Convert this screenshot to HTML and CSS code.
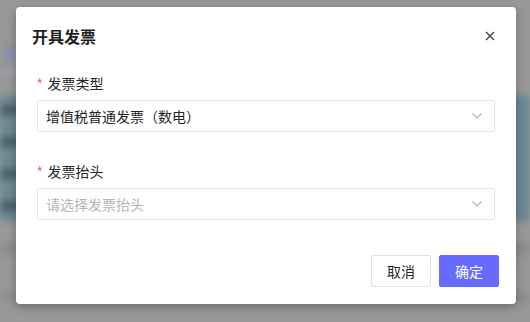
FILE: index.html
```html
<!DOCTYPE html>
<html lang="zh-CN">
<head>
    <meta charset="UTF-8">
    <meta name="viewport" content="width=device-width, initial-scale=1.0">
    <title>开具发票</title>
    <link rel="stylesheet" href="styles.css">
</head>
<body>
    <!-- page behind the dialog, dimmed and blurred -->
    <div class="page">
        <div class="page-top"></div>
        <div class="page-nav">
            <span class="nav-item"></span>
        </div>
        <div class="page-line"></div>
        <div class="page-table">
            <div class="row dark"></div>
            <div class="row"></div>
            <div class="row dark"></div>
            <div class="row"></div>
            <div class="row dark"></div>
            <div class="row"></div>
            <div class="row dark"></div>
        </div>
        <div class="page-foot">
            <div class="foot-band"></div>
            <div class="foot-band low"></div>
        </div>
    </div>

    <div class="modal">
        <div class="modal-header">
            <span class="modal-title">开具发票</span>
            <button class="modal-close" aria-label="关闭">
                <svg width="10" height="10" viewBox="0 0 10 10">
                    <path d="M1 1 L9 9 M9 1 L1 9" stroke="#444" stroke-width="1.4" fill="none"/>
                </svg>
            </button>
        </div>

        <div class="modal-body">
            <div class="form-item">
                <label class="form-label"><span class="required">*</span>发票类型</label>
                <div class="select">
                    <span class="select-value">增值税普通发票（数电）</span>
                    <svg class="arrow" width="10" height="6" viewBox="0 0 10 6">
                        <path d="M0.5 0.5 L5 5 L9.5 0.5" stroke="#b0b0b0" stroke-width="1.2" fill="none"/>
                    </svg>
                </div>
            </div>

            <div class="form-item last">
                <label class="form-label"><span class="required">*</span>发票抬头</label>
                <div class="select">
                    <span class="select-placeholder">请选择发票抬头</span>
                    <svg class="arrow" width="10" height="6" viewBox="0 0 10 6">
                        <path d="M0.5 0.5 L5 5 L9.5 0.5" stroke="#b0b0b0" stroke-width="1.2" fill="none"/>
                    </svg>
                </div>
            </div>
        </div>

        <div class="modal-footer">
            <button class="btn">取消</button>
            <button class="btn btn-primary">确定</button>
        </div>
    </div>
</body>
</html>
```

FILE: styles.css
```css
html, body {
    margin: 0;
    height: 100%;
}

body {
    background: #989898;
    font-family: 'Noto Sans CJK SC', 'Noto Sans', sans-serif;
    overflow: hidden;
}

/* background page */
.page {
    height: 100%;
    filter: blur(3px);
}

.page-top {
    height: 48px;
}

.page-nav {
    height: 14px;
    padding-left: 4px;
}

.nav-item {
    display: block;
    width: 14px;
    height: 12px;
    background: #8c8cb4;
}

.page-line {
    height: 4px;
    margin-top: 10px;
    background: #a2a0b8;
    width: 60px;
}

.page-table {
    margin-top: 19px;
    height: 126px;
    background: #6b8893;
    display: flex;
    flex-direction: column;
    padding-top: 10px;
    box-sizing: border-box;
    gap: 6px;
}

.row {
    height: 10px;
    width: 20px;
}

.row.dark {
    background: #4b616a;
}

.page-foot {
    padding-top: 22px;
}

.foot-band {
    height: 12px;
    background: #8d8d8d;
}

.foot-band.low {
    margin-top: 36px;
    background: #8f8f8f;
}

/* dialog */
.modal {
    position: absolute;
    left: 16px;
    top: 7px;
    width: 500px;
    background: #fff;
    border-radius: 4px;
    box-shadow: 0 3px 10px rgba(0, 0, 0, 0.28);
}

.modal-header {
    display: flex;
    align-items: center;
    justify-content: space-between;
    padding: 17px 19px 0 16px;
    height: 24px;
}

.modal-title {
    font-size: 16px;
    font-weight: 700;
    line-height: 24px;
    color: #1f1f1f;
}

.modal-close {
    border: none;
    background: none;
    padding: 0;
    width: 14px;
    height: 14px;
    display: flex;
    align-items: center;
    justify-content: center;
    cursor: pointer;
}

.modal-body {
    padding: 24px 21px 0 21px;
}

.form-item {
    margin-bottom: 28px;
}

.form-item.last {
    margin-bottom: 0;
}

.form-label {
    display: flex;
    align-items: center;
    height: 22px;
    font-size: 14px;
    color: #262626;
    margin-bottom: 6px;
}

.required {
    color: #f7606a;
    margin-right: 5px;
    font-family: 'Liberation Sans', sans-serif;
}

.select {
    height: 32px;
    box-sizing: border-box;
    border: 1px solid #e2e2e2;
    border-radius: 2px;
    display: flex;
    align-items: center;
    justify-content: space-between;
    padding: 0 12px 0 8px;
    font-size: 14px;
}

.select-value {
    color: #262626;
}

.select-placeholder {
    color: #b5b5b5;
}

.modal-footer {
    display: flex;
    justify-content: flex-end;
    gap: 8px;
    padding: 35px 17px 17px;
}

.btn {
    width: 60px;
    height: 32px;
    font-family: inherit;
    font-size: 14px;
    border: 1px solid #e0e0e0;
    border-radius: 2px;
    background: #fff;
    color: #262626;
    cursor: pointer;
}

.btn-primary {
    background: #676bfd;
    border-color: #676bfd;
    color: #fff;
}
```
